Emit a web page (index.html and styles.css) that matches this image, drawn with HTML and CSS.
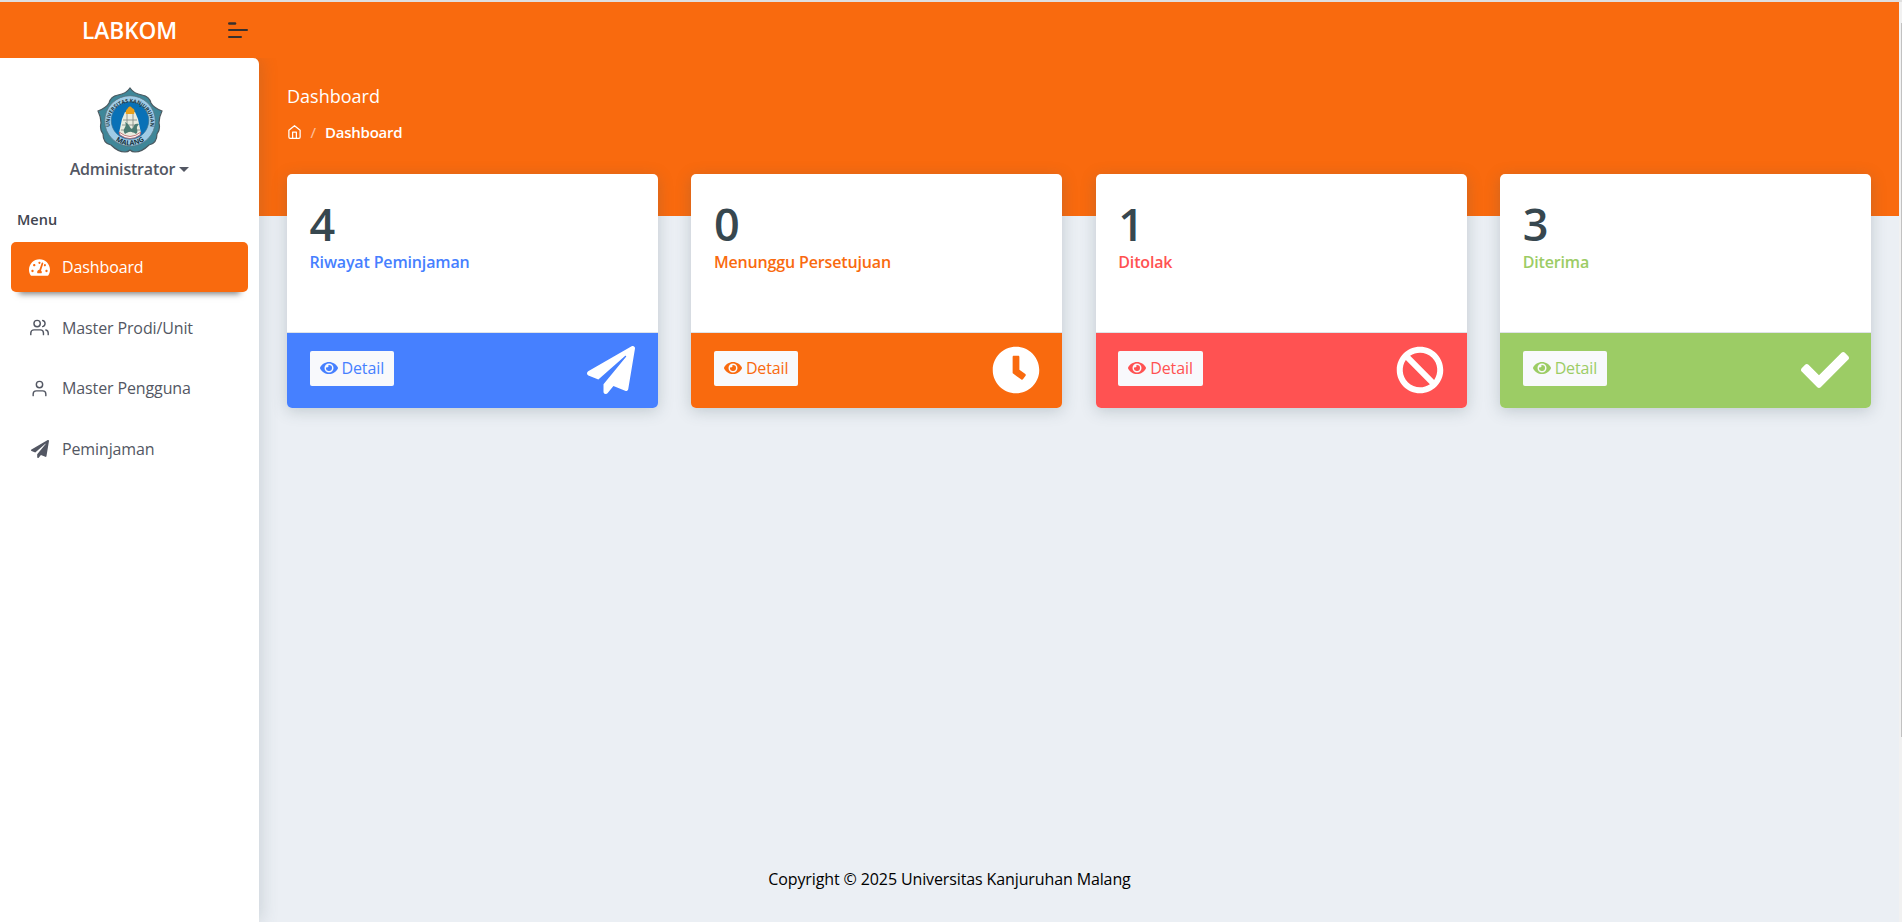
FILE: index.html
```html
<!DOCTYPE html>
<html lang="id">
<head>
<meta charset="utf-8">
<title>LABKOM - Dashboard</title>
<link rel="stylesheet" href="styles.css">
</head>
<body>
<svg class="defs" aria-hidden="true">
  <symbol id="eye" viewBox="0 0 576 512"><path d="M572.52 241.4C518.29 135.59 410.93 64 288 64S57.68 135.64 3.48 241.41a32.35 32.35 0 0 0 0 29.19C57.71 376.41 165.07 448 288 448s230.32-71.64 284.52-177.41a32.35 32.35 0 0 0 0-29.19zM288 400a144 144 0 1 1 144-144 143.93 143.93 0 0 1-144 144zm0-240a95.31 95.31 0 0 0-25.31 3.79 47.85 47.85 0 0 1-66.9 66.9A95.78 95.78 0 1 0 288 160z"/></symbol>
  <symbol id="plane" viewBox="0 0 512 512"><path d="M476 3.2L12.5 270.6c-18.1 10.4-15.8 35.6 2.2 43.2L121 358.4l287.3-253.2c5.5-4.9 13.3 2.6 8.6 8.3L176 407v80.5c0 23.6 28.5 32.9 42.5 15.8L282 426l124.6 52.2c14.2 6 30.4-2.9 33-18.2l72-432C515 7.8 493.3-6.8 476 3.2z"/></symbol>
  <symbol id="clock" viewBox="0 0 512 512"><path d="M256 8C119 8 8 119 8 256s111 248 248 248 248-111 248-248S393 8 256 8zm57.1 350.1L224.9 294c-3.1-2.3-4.9-5.9-4.9-9.7V116c0-6.6 5.4-12 12-12h48c6.6 0 12 5.4 12 12v137.7l63.5 46.2c5.4 3.9 6.5 11.4 2.6 16.8l-28.2 38.8c-3.9 5.3-11.4 6.5-16.8 2.6z"/></symbol>
  <symbol id="ban" viewBox="0 0 512 512"><path d="M256 8C119.034 8 8 119.033 8 256s111.034 248 248 248 248-111.034 248-248S392.967 8 256 8zm130.108 117.892c65.448 65.448 70 165.481 20.677 235.637L150.47 105.216c70.204-49.356 170.226-44.735 235.638 20.676zM125.892 386.108c-65.448-65.448-70-165.481-20.677-235.637L361.53 406.784c-70.203 49.356-170.226 44.736-235.638-20.676z"/></symbol>
  <symbol id="check" viewBox="0 0 512 512"><path d="M173.898 439.404l-166.4-166.4c-9.997-9.997-9.997-26.206 0-36.204l36.203-36.204c9.997-9.998 26.207-9.998 36.204 0L192 312.69 432.095 72.596c9.997-9.997 26.207-9.997 36.204 0l36.203 36.204c9.997 9.997 9.997 26.206 0 36.204l-294.4 294.401c-9.998 9.997-26.207 9.997-36.204-.001z"/></symbol>
</svg>

<div class="page">
  <header class="topbar">
    <span class="brand">LABKOM</span>
    <svg class="burger" viewBox="0 0 20 16" stroke="currentColor" stroke-linecap="round"><path d="M1.3 1.5H7" stroke-width="2.6"/><path d="M1 8H19M1 15H13" stroke-width="2"/></svg>
  </header>
  <div class="body">
    <aside class="sidebar">
      <div class="profile">
        <svg class="crest" viewBox="0 0 66 66">
          <path d="M33 1C35 4 39 7 45 8C51 9 53 12 54 16C56 20 60 22 65 24C63 28 62 31 62 36C63 40 63 43 60 47C60 53 57 57 52 58C48 62 44 65 38 65C36 65 34 64 33 63C32 64 30 65 28 65C22 65 18 62 14 58C9 57 6 53 6 47C3 43 3 40 4 36C4 31 3 28 1 24C6 22 10 20 12 16C13 12 15 9 21 8C27 7 31 4 33 1Z" fill="#3f8799" stroke="#4b5960" stroke-width="1.2"/>
          <circle cx="33" cy="34" r="25.3" fill="#9fcbe6" stroke="#58747f" stroke-width=".8"/>
          <circle cx="33" cy="33.5" r="18.7" fill="#0871b7" stroke="#366e8f" stroke-width=".7"/>
          <path d="M25 32L28 25H38L41 32L44 46L37 51H29L22 46Z" fill="#e9ecdf"/>
          <path d="M26 33h14M25 38h16M24 43h19M30 26v20M36 26v20" stroke="#7b877d" stroke-width=".8"/>
          <path d="M28 47C24 41 31 41 28 35C34 38 33 44 36 41C37 38 38 36 42 37C37 42 43 43 39 47C35 44 32 44 28 47Z" fill="#4b7c73"/>
          <path d="M29 27C28 24 30 22 31 21C32 19 34 19 35 21C38 22 38 25 37 27Z" fill="#e8a01c"/>
          <path d="M22 45Q33 54 44 45L43 48Q33 55 23 48Z" fill="#fff" stroke="#b65b5e" stroke-width=".8"/>
          <path id="arcTop" d="M12.7 39A20.5 20.5 0 1 1 53.3 39" fill="none"/>
          <path id="arcBottom" d="M11 44A24 24 0 0 0 55 44" fill="none"/>
          <text class="crest-top"><textPath href="#arcTop" startOffset="50%" text-anchor="middle">UNIVERSITAS KANJURUHAN</textPath></text>
          <text class="crest-bottom"><textPath href="#arcBottom" startOffset="50%" text-anchor="middle">MALANG</textPath></text>
        </svg>
        <div class="user">Administrator <span class="caret"></span></div>
      </div>
      <div class="caption">Menu</div>
      <nav class="menu">
        <a class="item active"><span class="ico"><svg class="dash" viewBox="0 0 576 512" fill="currentColor"><path d="M288 32C128.94 32 0 160.94 0 320c0 52.8 14.25 102.26 39.06 144.8 5.61 9.62 16.3 15.2 27.44 15.2h443c11.14 0 21.83-5.58 27.44-15.2C561.75 422.26 576 372.8 576 320c0-159.06-128.94-288-288-288zm0 64c14.71 0 26.58 10.13 30.32 23.65-1.11 2.26-2.64 4.23-3.45 6.67l-9.22 27.67c-5.13 3.49-10.97 6.01-17.64 6.01-17.67 0-32-14.33-32-32S270.33 96 288 96zM96 384c-17.67 0-32-14.33-32-32s14.33-32 32-32 32 14.33 32 32-14.33 32-32 32zm48-160c-17.67 0-32-14.33-32-32s14.33-32 32-32 32 14.33 32 32-14.33 32-32 32zm246.77-72.41l-61.33 184C343.13 347.33 352 364.54 352 384c0 11.72-3.38 22.55-8.88 32H232.88c-5.5-9.45-8.88-20.28-8.88-32 0-33.94 26.5-61.43 59.9-63.59l61.34-184.01c4.17-12.56 17.73-19.45 30.36-15.17 12.57 4.19 19.35 17.79 15.17 30.36zm14.66 57.2l15.52-46.55c3.47-1.29 7.13-2.23 11.05-2.23 17.67 0 32 14.33 32 32s-14.33 32-32 32c-11.38-.01-20.89-6.28-26.57-15.22zM480 384c-17.67 0-32-14.33-32-32s14.33-32 32-32 32 14.33 32 32-14.33 32-32 32z"/></svg></span>Dashboard</a>
        <a class="item"><span class="ico"><svg class="line" viewBox="0 0 24 24"><path d="M17 21v-2a4 4 0 0 0-4-4H5a4 4 0 0 0-4 4v2M23 21v-2a4 4 0 0 0-3-3.87M16 3.13a4 4 0 0 1 0 7.75"/><circle cx="9" cy="7" r="4"/></svg></span>Master Prodi/Unit</a>
        <a class="item"><span class="ico"><svg class="line" viewBox="0 0 24 24"><path d="M20 21v-2a4 4 0 0 0-4-4H8a4 4 0 0 0-4 4v2"/><circle cx="12" cy="7" r="4"/></svg></span>Master Pengguna</a>
        <a class="item"><span class="ico"><svg class="send" fill="currentColor"><use href="#plane"/></svg></span>Peminjaman</a>
      </nav>
    </aside>
    <main class="content">
      <h1 class="title">Dashboard</h1>
      <div class="crumbs">
        <svg class="home" viewBox="0 0 24 24"><path d="M3 9.2l9-7.2 9 7.2V20a2 2 0 0 1-2 2H5a2 2 0 0 1-2-2z"/><path d="M9 22V12h6v10"/></svg>
        <span class="slash">/</span><strong>Dashboard</strong>
      </div>
      <section class="cards">
        <article class="card blue">
          <div class="info"><div class="num">4</div><div class="label">Riwayat Peminjaman</div></div>
          <div class="foot"><a class="btn"><svg class="eye"><use href="#eye"/></svg>Detail</a><svg class="big"><use href="#plane"/></svg></div>
        </article>
        <article class="card orange">
          <div class="info"><div class="num">0</div><div class="label">Menunggu Persetujuan</div></div>
          <div class="foot"><a class="btn"><svg class="eye"><use href="#eye"/></svg>Detail</a><svg class="big"><use href="#clock"/></svg></div>
        </article>
        <article class="card red">
          <div class="info"><div class="num">1</div><div class="label">Ditolak</div></div>
          <div class="foot"><a class="btn"><svg class="eye"><use href="#eye"/></svg>Detail</a><svg class="big"><use href="#ban"/></svg></div>
        </article>
        <article class="card green">
          <div class="info"><div class="num">3</div><div class="label">Diterima</div></div>
          <div class="foot"><a class="btn"><svg class="eye"><use href="#eye"/></svg>Detail</a><svg class="big"><use href="#check"/></svg></div>
        </article>
      </section>
      <footer class="copyright">Copyright © 2025 Universitas Kanjuruhan Malang</footer>
    </main>
  </div>
</div>
<div class="scroll"><div class="thumb"></div></div>
</body>
</html>
```
FILE: styles.css
```css
* { box-sizing: border-box; }
body {
  margin: 0;
  height: 922px;
  display: flex;
  border-top: 2px solid #dfdfdf;
  overflow: hidden;
  background: #ebeff4;
  font-family: "Open Sans", sans-serif;
  font-size: 16px;
  letter-spacing: -.12px;
  color: #535763;
}
svg { display: block; flex: none; letter-spacing: 0; }
.defs { display: none; }
.page {
  flex: 1;
  display: flex;
  flex-direction: column;
  background: linear-gradient(#f96a0e, #f96a0e) top / 100% 214px no-repeat;
}
.scroll { width: 3px; padding: 21px 0 0 2px; background: #f1f1f1; }
.thumb { height: 714px; background: #c1c1c1; }

.topbar { height: 56px; display: flex; align-items: center; padding-left: 82px; position: relative; z-index: 1; background: #f96a0e; }
.brand { width: 146px; padding-top: 2px; color: #fff; font-size: 22.7px; font-weight: 600; letter-spacing: -.05px; line-height: 54px; }
.burger { width: 20px; height: 16px; color: #37302f; }

.body { flex: 1; display: flex; }
.sidebar {
  width: 259px;
  background: #fff;
  border-radius: 0 6px 0 0;
  box-shadow: 2px 0 18px rgba(69, 90, 100, .2);
}
.profile { display: flex; flex-direction: column; align-items: center; padding-top: 29px; }
.crest { width: 66px; height: 66px; }
.crest-top { font-size: 5.2px; font-weight: 700; fill: #1c3843; }
.crest-bottom { font-size: 7px; font-weight: 700; fill: #17323d; }
.user { display: flex; align-items: center; gap: 4px; margin-top: 4px; line-height: 24px; font-weight: 600; letter-spacing: -.2px; }
.caret { border: 5px solid transparent; border-top-color: currentColor; border-bottom: 0; }
.caption { margin: 27px 0 0 17px; padding-top: 2px; height: 34px; font-size: 14.5px; line-height: 20px; font-weight: 600; letter-spacing: 0; color: #40444f; }
.menu { display: flex; flex-direction: column; gap: 10.6px; padding: 0 11px; }
.item { display: flex; align-items: center; height: 50px; border-radius: 5px; padding-left: 16px; }
.ico { width: 25px; margin-right: 10px; display: flex; justify-content: center; }
.active { background: #f96a0e; color: #fff; box-shadow: 0 10px 6px -8px rgba(0, 0, 0, .5); }
.dash { width: 21px; height: 19px; }
.line { width: 19px; height: 19px; fill: none; stroke: currentColor; stroke-width: 1.8; stroke-linecap: round; stroke-linejoin: round; }
.send { width: 18px; height: 18px; }

.content { flex: 1; display: flex; flex-direction: column; padding: 26px 28px 0; }
.title { margin: 0; font-size: 18px; line-height: 24px; font-weight: 400; letter-spacing: 0; color: #fff; }
.crumbs { display: flex; align-items: center; height: 24px; margin-top: 12px; font-size: 15px; color: #fff; }
.home { width: 15px; height: 16px; fill: none; stroke: currentColor; stroke-width: 2; stroke-linejoin: round; }
.slash { margin: 0 9px 0 8.5px; opacity: .6; }
.crumbs strong { font-weight: 600; letter-spacing: -.22px; }
.cards { display: grid; grid-template-columns: repeat(4, 1fr); gap: 33.5px; margin-top: 30px; }
.card { height: 234px; display: flex; flex-direction: column; background: #fff; border-radius: 5px; overflow: hidden; box-shadow: 0 3px 15px rgba(69, 90, 100, .25); }
.info { flex: 1; padding: 25px 22.5px 0; }
.num { font-size: 45px; line-height: 50px; font-weight: 600; letter-spacing: 0; color: #37474f; }
.label { padding-top: 1px; font-weight: 600; line-height: 24px; letter-spacing: -.15px; color: var(--tone); }
.foot { height: 76px; display: flex; justify-content: space-between; align-items: flex-start; padding: 13px 22.5px 0; border-top: 1px solid #dfe3e8; background: var(--tone); background-clip: padding-box; }
.btn { display: flex; align-items: center; gap: 4px; height: 35px; margin-top: 5px; padding: 0 10px 1px; border-radius: 2px; background: #f8f9fc; color: var(--tone); }
.eye { width: 18px; height: 16px; fill: currentColor; }
.big { width: 48px; height: 48px; fill: #fff; }
.blue { --tone: #4680ff; }
.orange { --tone: #f96a0e; }
.red { --tone: #ff5252; }
.green { --tone: #9ccc65; }
.copyright { margin: auto 0 31px; text-align: center; line-height: 24px; color: #000; width: 1325px; }
```
